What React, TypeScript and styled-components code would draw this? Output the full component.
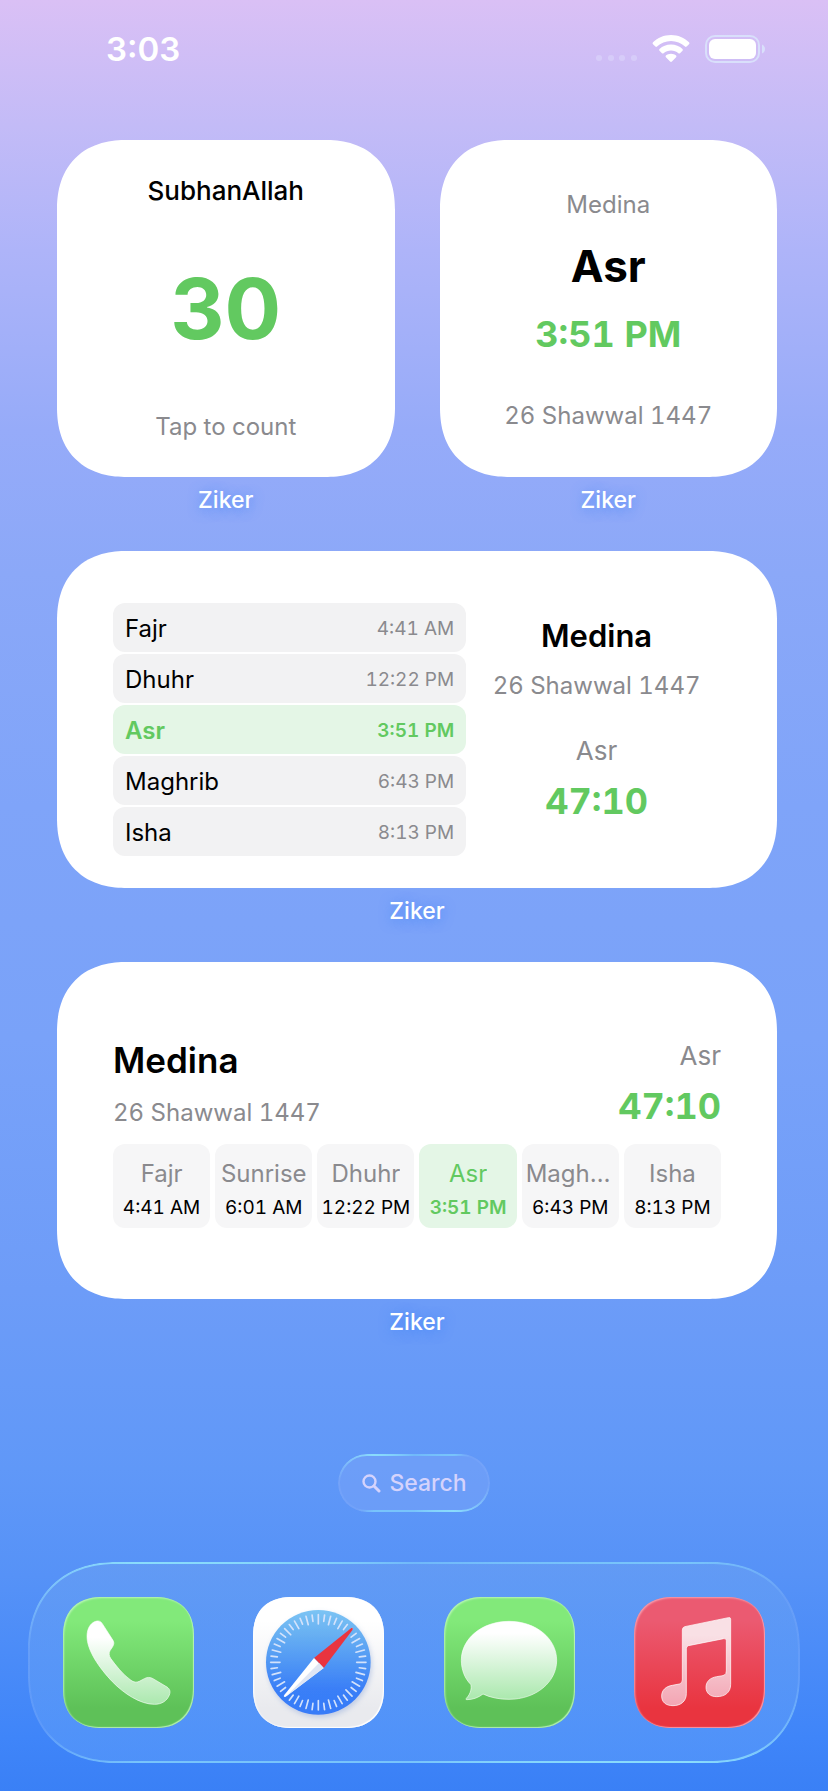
import { useState } from "react";
import styled, { createGlobalStyle, css } from "styled-components";

const GlobalStyle = createGlobalStyle`
  * {
    box-sizing: border-box;
  }
  body {
    margin: 0;
    font-family: Inter, "Liberation Sans", sans-serif;
    -webkit-font-smoothing: antialiased;
  }
  button {
    font: inherit;
    color: inherit;
    border: none;
    cursor: pointer;
  }
`;

const Screen = styled.div`
  display: flex;
  flex-direction: column;
  min-height: 100vh;
  background: linear-gradient(
    180deg,
    #dac0f5 0%,
    #c3bbf7 7%,
    #aeb4f9 14%,
    #96abf9 24%,
    #8ba8f8 32%,
    #7fa4f9 45%,
    #79a2f9 58%,
    #6d9cf8 72%,
    #6098f8 82%,
    #5692f7 88%,
    #3f85f9 97%,
    #3a80f6 100%
  );
`;

const StatusBar = styled.header`
  display: flex;
  align-items: flex-start;
  justify-content: space-between;
  height: 140px;
  padding: 35px 62px 0 106px;
  color: #fff;
  time {
    font-size: 33px;
    line-height: 28px;
    font-weight: 600;
  }
  .icons {
    display: flex;
    align-items: center;
    gap: 15px;
  }
`;

const Widgets = styled.main`
  display: flex;
  flex-direction: column;
  gap: 37px;
  padding: 0 51px 0 57px;
`;

const Pair = styled.div`
  display: grid;
  grid-template-columns: 1fr 1fr;
  gap: 45px;
`;

const WidgetWrap = styled.section`
  display: flex;
  flex-direction: column;
  align-items: stretch;
  gap: 9px;
`;

const WidgetLabel = styled.h2`
  margin: 0;
  font-size: 23px;
  line-height: 28px;
  font-weight: 500;
  text-align: center;
  color: #fff;
  text-shadow: 0 2px 12px rgba(60, 130, 250, 0.7);
`;

const cardBox = css`
  min-height: 337px;
  background: #fff;
  color: #000;
  border-radius: 64px;
  @supports (corner-shape: squircle) {
    border-radius: 70px;
    corner-shape: superellipse(1.2);
  }
`;

const CounterCard = styled.button`
  ${cardBox}
  display: flex;
  flex-direction: column;
  align-items: center;
  justify-content: space-between;
  padding: 35px 16px;
`;

const NextCard = styled.div`
  ${cardBox}
  display: flex;
  flex-direction: column;
  align-items: center;
  justify-content: center;
  gap: 19px;
  padding-top: 3px;
`;

const ScheduleCard = styled.div`
  ${cardBox}
  display: grid;
  grid-template-columns: 352fr 248fr;
  align-items: center;
  gap: 6px;
  padding: 0 56px;
`;

const StripCard = styled.div`
  ${cardBox}
  display: flex;
  flex-direction: column;
  justify-content: center;
  gap: 16px;
  padding: 5px 56px 0;
`;

const Phrase = styled.span`
  font-size: 26px;
  line-height: 32px;
  font-weight: 500;
`;

const Count = styled.span`
  margin-bottom: 2px;
  font-size: 84px;
  line-height: 92px;
  font-weight: 700;
  color: #62c960;
`;

const Muted = styled.span<{ $large?: boolean }>`
  font-size: ${(p) => (p.$large ? 26 : 24)}px;
  line-height: ${(p) => (p.$large ? 32 : 30)}px;
  font-variant-numeric: tabular-nums;
  color: #8a8a8e;
  white-space: nowrap;
`;

const PrayerName = styled.span`
  font-size: 44px;
  line-height: 54px;
  font-weight: 700;
`;

const Accent = styled.span`
  font-size: 36px;
  line-height: 44px;
  font-weight: 700;
  font-variant-numeric: tabular-nums;
  color: #62c960;
  white-space: nowrap;
`;

const City = styled.span<{ $large?: boolean }>`
  font-size: ${(p) => (p.$large ? 35 : 31)}px;
  line-height: ${(p) => (p.$large ? 44 : 38)}px;
  font-weight: 600;
`;

const DateLine = styled(Muted)`
  margin-top: 26px;
`;

const Schedule = styled.ul`
  display: flex;
  flex-direction: column;
  gap: 2px;
  margin: 20px 0 0;
  padding: 0;
  list-style: none;
`;

const ScheduleRow = styled.li<{ $active: boolean }>`
  display: flex;
  align-items: center;
  justify-content: space-between;
  min-height: 49px;
  padding: 2px 12px 0;
  border-radius: 12px;
  background: ${(p) => (p.$active ? "#e4f6e6" : "#f2f2f3")};
  color: ${(p) => (p.$active ? "#62c960" : "#000")};
  font-size: 24px;
  line-height: 30px;
  font-weight: ${(p) => (p.$active ? 600 : 400)};
  time {
    font-size: 19px;
    line-height: 24px;
    font-variant-numeric: tabular-nums;
    color: ${(p) => (p.$active ? "#62c960" : "#8a8a8e")};
  }
`;

const Column = styled.div<{ $align: string; $gap: number }>`
  display: flex;
  flex-direction: column;
  align-items: ${(p) => p.$align};
  gap: ${(p) => p.$gap}px;
`;

const Summary = styled.div`
  display: flex;
  flex-direction: column;
  align-items: center;
  gap: 34px;
`;

const StripHead = styled.div`
  display: flex;
  align-items: flex-end;
  justify-content: space-between;
`;

const Strip = styled.ul`
  display: grid;
  grid-template-columns: repeat(6, minmax(0, 1fr));
  gap: 5px;
  margin: 0;
  padding: 0;
  list-style: none;
`;

const StripCell = styled.li<{ $active: boolean }>`
  display: flex;
  flex-direction: column;
  align-items: center;
  gap: 7px;
  padding: 15px 4px 8px;
  border-radius: 12px;
  background: ${(p) => (p.$active ? "#e4f6e6" : "#f6f6f7")};
  span {
    max-width: 100%;
    overflow: hidden;
    text-overflow: ellipsis;
    font-size: 24px;
    line-height: 30px;
    color: ${(p) => (p.$active ? "#62c960" : "#8a8a8e")};
  }
  time {
    font-size: 19px;
    line-height: 24px;
    font-weight: ${(p) => (p.$active ? 600 : 400)};
    font-variant-numeric: tabular-nums;
    color: ${(p) => (p.$active ? "#62c960" : "#000")};
    white-space: nowrap;
  }
`;

// Bright glass rim that fades out on the top-right and bottom-left corners
const glassRim = (edge: number) => css`
  position: relative;
  &::before {
    content: "";
    position: absolute;
    inset: 0;
    padding: 2px;
    border-radius: inherit;
    corner-shape: inherit;
    pointer-events: none;
    background: conic-gradient(
      #70b8fa 0deg,
      #78c4fb ${edge - 5}deg,
      rgba(140, 180, 255, 0.2) ${edge + 5}deg,
      rgba(140, 180, 255, 0.25) 92deg,
      #8adcfc ${185 - edge}deg,
      #78c4fb 180deg,
      #78c4fb ${edge + 175}deg,
      rgba(140, 180, 255, 0.2) ${edge + 185}deg,
      rgba(140, 180, 255, 0.25) 272deg,
      #8adcfc ${365 - edge}deg,
      #70b8fa 360deg
    );
    mask: linear-gradient(#000 0 0) content-box exclude, linear-gradient(#000 0 0);
  }
`;

const SearchButton = styled.button`
  ${glassRim(60)}
  display: flex;
  align-items: center;
  align-self: center;
  gap: 8px;
  height: 58px;
  margin: auto 0 50px;
  padding: 0 23px 0 24px;
  border-radius: 29px;
  background: rgba(122, 163, 248, 0.5);
  color: #d5d3fc;
  font-size: 23px;
  line-height: 28px;
  font-weight: 500;
`;

const Dock = styled.nav`
  ${glassRim(75)}
  display: flex;
  justify-content: space-between;
  margin: 0 28px 28px;
  padding: 35px;
  background: linear-gradient(180deg, rgba(105, 160, 243, 0.6), rgba(90, 155, 250, 0.6));
  border-radius: 84px;
  @supports (corner-shape: squircle) {
    border-radius: 88px;
    corner-shape: superellipse(1.15);
  }
`;

const AppIcon = styled.button<{ $from: string; $to: string; $rim: string }>`
  width: 131px;
  height: 131px;
  padding: 0;
  overflow: hidden;
  background: linear-gradient(180deg, ${(p) => p.$from} 18%, ${(p) => p.$to} 85%);
  box-shadow: inset 1px 1px 2px ${(p) => p.$rim}, inset -1px -1px 1px ${(p) => p.$rim};
  border-radius: 34px;
  @supports (corner-shape: squircle) {
    border-radius: 40px;
    corner-shape: superellipse(1.25);
  }
  svg {
    display: block;
  }
`;

type Prayer = { name: string; time: string };

const prayers: Prayer[] = [
  { name: "Fajr", time: "4:41 AM" },
  { name: "Sunrise", time: "6:01 AM" },
  { name: "Dhuhr", time: "12:22 PM" },
  { name: "Asr", time: "3:51 PM" },
  { name: "Maghrib", time: "6:43 PM" },
  { name: "Isha", time: "8:13 PM" },
];
const next = "Asr";
const city = "Medina";
const hijri = "26 Shawwal 1447";
const remaining = "47:10";

const StatusIcons = () => (
  <div className="icons">
    <svg width="42" height="28" viewBox="0 0 42 28" fill="#dcd6fb" opacity="0.6">
      <circle cx="4" cy="23" r="3" />
      <circle cx="16" cy="23" r="3" />
      <circle cx="27" cy="23" r="3" />
      <circle cx="39" cy="23" r="3" />
    </svg>
    <svg width="38" height="28" viewBox="0 0 38 28" fill="#fff">
      <path d="M19 0C26 0 32.400 2.800 37 7.200Q38 8.200 37 9.200L34.600 11.600Q33.800 12.300 33 11.600C29.300 8.200 24.400 6.100 19 6.100S8.700 8.200 5 11.600Q4.200 12.300 3.400 11.600L1 9.200Q0 8.200 1 7.200C5.600 2.800 12 0 19 0Z" />
      <path d="M19 9.600C23.500 9.600 27.500 11.300 30.500 14.100Q31.300 15 30.500 15.800L28 18.200Q27.200 18.900 26.400 18.200C24.400 16.500 21.800 15.500 19 15.500S13.600 16.500 11.600 18.200Q10.800 18.900 10 18.200L7.500 15.800Q6.700 15 7.500 14.100C10.500 11.300 14.500 9.600 19 9.600Z" />
      <path d="M19 18.800C21 18.800 22.800 19.500 24.100 20.600Q24.900 21.400 24.100 22.200L19.900 26.600Q19 27.400 18.100 26.600L13.900 22.200Q13.100 21.400 13.900 20.600C15.200 19.500 17 18.800 19 18.800Z" />
    </svg>
    <svg width="61" height="28" viewBox="0 0 61 28">
      <rect x="1" y="1" width="53" height="26" rx="9" fill="none" stroke="#d9dffb" strokeWidth="2" />
      <rect x="4" y="4" width="47" height="20" rx="6" fill="#fff" />
      <path d="M57 9.500Q60 11 60 14T57 18.500Z" fill="#d9dffb" />
    </svg>
  </div>
);

const PhoneGlyph = () => (
  <svg width="131" height="131" viewBox="0 0 393 393">
    <defs>
      <linearGradient id="phone" x1="0" y1="0" x2="0" y2="1">
        <stop offset="0.2" stopColor="#fff" />
        <stop offset="1" stopColor="#abe8ae" />
      </linearGradient>
    </defs>
    <path
      fill="url(#phone)"
      stroke="#fff"
      strokeOpacity="0.6"
      strokeWidth="3"
      d="M72 118C72 95 82 78 98 73C106 70 113 72 118 80L150 130C154 137 153 142 149 149L141 161C137 168 138 177 143 184C158 205 180 233 204 250C212 256 222 257 229 253L244 245C252 240 262 240 270 245L312 270C321 276 323 284 319 294C312 312 296 322 274 322C232 322 183 290 148 254C108 212 72 160 72 118Z"
    />
  </svg>
);

const ticks = Array.from({ length: 48 }, (_, i) => i);

const SafariGlyph = () => (
  <svg width="131" height="131" viewBox="0 0 393 393">
    <defs>
      <linearGradient id="dial" x1="0" y1="0" x2="0" y2="1">
        <stop offset="0" stopColor="#7cc4f4" />
        <stop offset="0.25" stopColor="#66aef2" />
        <stop offset="0.75" stopColor="#3a7ff7" />
        <stop offset="1" stopColor="#377bf8" />
      </linearGradient>
      <filter id="dialShadow" x="-20%" y="-20%" width="140%" height="140%">
        <feDropShadow dx="4" dy="8" stdDeviation="8" floodColor="#8ba6d8" floodOpacity="0.45" />
      </filter>
    </defs>
    <circle cx="196" cy="196" r="157" fill="url(#dial)" filter="url(#dialShadow)" />
    {ticks.map((i) => (
      <line
        key={i}
        x1="196"
        x2="196"
        y1="53"
        y2={i % 12 === 0 ? 81 : i % 2 ? 72 : 79}
        stroke="#d3e2fb"
        strokeWidth="5"
        strokeLinecap="round"
        transform={`rotate(${i * 7.5} 196 196)`}
      />
    ))}
    <path d="M295 93Q301 91 299 98L212 213L183 183Z" fill="#e9343f" />
    <path d="M183 183L212 213L98 299Q92 301 94 294Z" fill="#fff" />
    <path d="M198 198L212 213L98 299Z" fill="#dfe6f4" />
  </svg>
);

const MessagesGlyph = () => (
  <svg width="131" height="131" viewBox="0 0 393 393">
    <defs>
      <linearGradient id="bubble" x1="0" y1="0" x2="0" y2="1">
        <stop offset="0.15" stopColor="#fff" />
        <stop offset="1" stopColor="#aae8ad" />
      </linearGradient>
    </defs>
    <path
      fill="url(#bubble)"
      stroke="#fff"
      strokeOpacity="0.6"
      strokeWidth="3"
      d="M195 73C275 73 338 124 338 190C338 256 275 307 195 307C167 307 139 302 117 291C103 302 86 308 69 308C65 308 65 306 68 303C80 290 84 272 80 262C62 244 52 218 52 190C52 124 115 73 195 73Z"
    />
  </svg>
);

const MusicGlyph = () => (
  <svg width="131" height="131" viewBox="0 0 393 393">
    <defs>
      <linearGradient id="note" x1="0" y1="0" x2="0" y2="1">
        <stop offset="0.2" stopColor="#f9e0e5" />
        <stop offset="1" stopColor="#f3a5b3" />
      </linearGradient>
    </defs>
    <path
      fill="url(#note)"
      stroke="#fff"
      strokeOpacity="0.7"
      strokeWidth="3"
      d="M145 99Q145 91 152 89L283 62Q290 60 290 67L290 262C290 287 272 299 248 299C228 299 216 288 216 271C216 253 229 242 248 239C258 237 266 237 271 234Q277 231 277 222L277 131Q277 123 269 125L163 146Q157 148 157 155L157 290C157 313 140 326 117 326C95 326 83 315 83 297C83 279 96 268 115 265L136 261Q145 259 145 249Z"
    />
  </svg>
);

const apps = [
  { name: "Phone", from: "#82e97a", to: "#5ec158", rim: "rgba(200, 250, 200, 0.8)", Glyph: PhoneGlyph },
  { name: "Safari", from: "#ffffff", to: "#e9eaee", rim: "#ffffff", Glyph: SafariGlyph },
  { name: "Messages", from: "#82e97a", to: "#5ec158", rim: "rgba(200, 250, 200, 0.8)", Glyph: MessagesGlyph },
  { name: "Music", from: "#eb5a71", to: "#e9343f", rim: "rgba(250, 180, 195, 0.8)", Glyph: MusicGlyph },
];

const App = () => {
  const [count, setCount] = useState(30);

  return (
    <Screen>
      <GlobalStyle />
      <StatusBar>
        <time>3:03</time>
        <StatusIcons />
      </StatusBar>

      <Widgets>
        <Pair>
          <WidgetWrap>
            <CounterCard type="button" onClick={() => setCount(count + 1)}>
              <Phrase>SubhanAllah</Phrase>
              <Count>{count}</Count>
              <Muted>Tap to count</Muted>
            </CounterCard>
            <WidgetLabel>Ziker</WidgetLabel>
          </WidgetWrap>
          <WidgetWrap>
            <NextCard>
              <Muted>{city}</Muted>
              <PrayerName>{next}</PrayerName>
              <Accent>3:51 PM</Accent>
              <DateLine>{hijri}</DateLine>
            </NextCard>
            <WidgetLabel>Ziker</WidgetLabel>
          </WidgetWrap>
        </Pair>

        <WidgetWrap>
          <ScheduleCard>
            <Schedule>
              {prayers
                .filter((p) => p.name !== "Sunrise")
                .map((p) => (
                  <ScheduleRow key={p.name} $active={p.name === next}>
                    {p.name}
                    <time>{p.time}</time>
                  </ScheduleRow>
                ))}
            </Schedule>
            <Summary>
              <Column $align="center" $gap={16}>
                <City>{city}</City>
                <Muted>{hijri}</Muted>
              </Column>
              <Column $align="center" $gap={12}>
                <Muted $large>{next}</Muted>
                <Accent>{remaining}</Accent>
              </Column>
            </Summary>
          </ScheduleCard>
          <WidgetLabel>Ziker</WidgetLabel>
        </WidgetWrap>

        <WidgetWrap>
          <StripCard>
            <StripHead>
              <Column $align="flex-start" $gap={16}>
                <City $large>{city}</City>
                <Muted>{hijri}</Muted>
              </Column>
              <Column $align="flex-end" $gap={12}>
                <Muted $large>{next}</Muted>
                <Accent>{remaining}</Accent>
              </Column>
            </StripHead>
            <Strip>
              {prayers.map((p) => (
                <StripCell key={p.name} $active={p.name === next}>
                  <span>{p.name}</span>
                  <time>{p.time}</time>
                </StripCell>
              ))}
            </Strip>
          </StripCard>
          <WidgetLabel>Ziker</WidgetLabel>
        </WidgetWrap>
      </Widgets>

      <SearchButton type="button">
        <svg width="19" height="19" viewBox="0 0 19 19" fill="none" stroke="currentColor" strokeLinecap="round">
          <circle cx="7.500" cy="7.500" r="6" strokeWidth="2.400" />
          <path d="M12 12L17 17" strokeWidth="3" />
        </svg>
        Search
      </SearchButton>

      <Dock aria-label="Dock">
        {apps.map(({ name, from, to, rim, Glyph }) => (
          <AppIcon key={name} type="button" aria-label={name} $from={from} $to={to} $rim={rim}>
            <Glyph />
          </AppIcon>
        ))}
      </Dock>
    </Screen>
  );
};

export default App;
